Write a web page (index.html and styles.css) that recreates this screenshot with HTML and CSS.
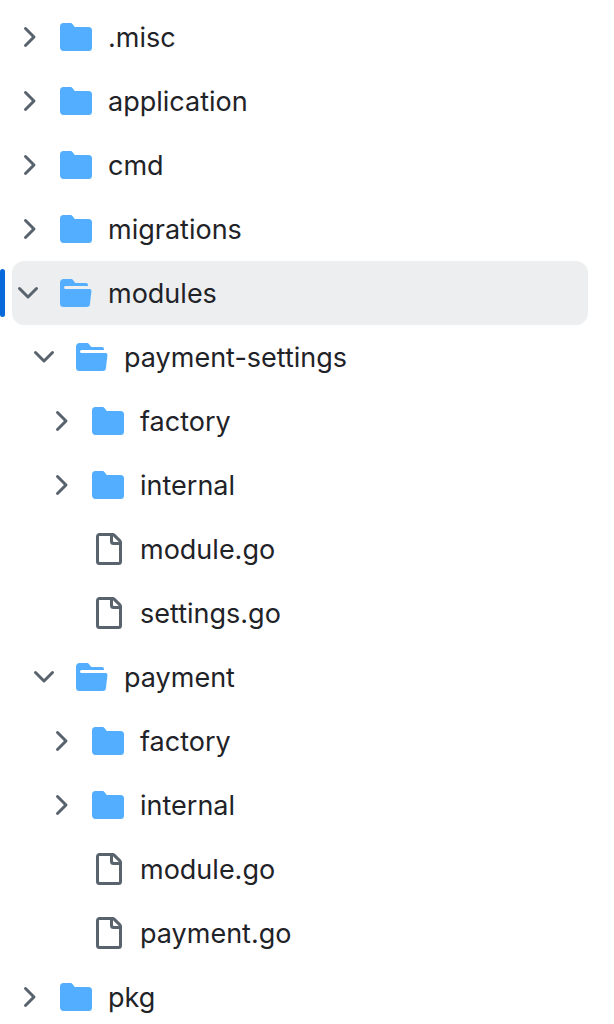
FILE: index.html
```html
<!DOCTYPE html>
<html lang="en">
<head>
<meta charset="utf-8">
<title>File tree</title>
<link rel="stylesheet" href="styles.css">
</head>
<body>
<svg class="defs" width="0" height="0" aria-hidden="true">
  <symbol id="i-right" viewBox="0 0 16 16"><path d="M6.22 3.22a.75.75 0 0 1 1.06 0l4.25 4.25a.75.75 0 0 1 0 1.06l-4.25 4.25a.751.751 0 0 1-1.042-.018.751.751 0 0 1-.018-1.042L9.94 8 6.22 4.28a.75.75 0 0 1 0-1.06Z"/></symbol>
  <symbol id="i-down" viewBox="0 0 16 16"><path d="M12.78 5.22a.749.749 0 0 1 0 1.06l-4.25 4.25a.749.749 0 0 1-1.06 0L3.22 6.28a.749.749 0 1 1 1.06-1.06L8 8.94l3.72-3.72a.749.749 0 0 1 1.06 0Z"/></symbol>
  <symbol id="i-folder" viewBox="0 0 16 16"><path d="M1.75 1A1.75 1.75 0 0 0 0 2.75v10.5C0 14.216.784 15 1.75 15h12.5A1.75 1.75 0 0 0 16 13.25v-8.5A1.75 1.75 0 0 0 14.25 3H7.5a.25.25 0 0 1-.2-.1l-.9-1.2C6.07 1.26 5.55 1 5 1H1.75Z"/></symbol>
  <symbol id="i-open" viewBox="0 0 16 16"><path d="M.513 1.513A1.75 1.75 0 0 1 1.75 1h3.5c.55 0 1.07.26 1.4.7l.9 1.2a.25.25 0 0 0 .2.1H13a1 1 0 0 1 1 1v.5H2.75a.75.75 0 0 0 0 1.5h11.978a1 1 0 0 1 .994 1.117L15 13.25A1.75 1.75 0 0 1 13.25 15H1.75A1.75 1.75 0 0 1 0 13.25V2.75c0-.464.184-.91.513-1.237Z"/></symbol>
  <symbol id="i-file" viewBox="0 0 16 16"><path d="M2 1.75C2 .784 2.784 0 3.75 0h6.586c.464 0 .909.184 1.237.513l2.914 2.914c.329.328.513.773.513 1.237v9.586A1.75 1.75 0 0 1 13.25 16h-9.5A1.75 1.75 0 0 1 2 14.25Zm1.75-.25a.25.25 0 0 0-.25.25v12.5c0 .138.112.25.25.25h9.5a.25.25 0 0 0 .25-.25V6h-2.75A1.75 1.75 0 0 1 9 4.25V1.5Zm6.75.062V4.25c0 .138.112.25.25.25h2.688l-.011-.013-2.914-2.914-.013-.011Z"/></symbol>
</svg>
<ul class="tree">
  <li class="row"><svg class="chev"><use href="#i-right"/></svg><svg class="dir"><use href="#i-folder"/></svg><span class="name">.misc</span></li>
  <li class="row"><svg class="chev"><use href="#i-right"/></svg><svg class="dir"><use href="#i-folder"/></svg><span class="name">application</span></li>
  <li class="row"><svg class="chev"><use href="#i-right"/></svg><svg class="dir"><use href="#i-folder"/></svg><span class="name">cmd</span></li>
  <li class="row"><svg class="chev"><use href="#i-right"/></svg><svg class="dir"><use href="#i-folder"/></svg><span class="name">migrations</span></li>
  <li class="row current"><svg class="chev"><use href="#i-down"/></svg><svg class="dir"><use href="#i-open"/></svg><span class="name">modules</span></li>
  <li class="row l1"><svg class="chev"><use href="#i-down"/></svg><svg class="dir"><use href="#i-open"/></svg><span class="name">payment-settings</span></li>
  <li class="row l2"><svg class="chev"><use href="#i-right"/></svg><svg class="dir"><use href="#i-folder"/></svg><span class="name">factory</span></li>
  <li class="row l2"><svg class="chev"><use href="#i-right"/></svg><svg class="dir"><use href="#i-folder"/></svg><span class="name">internal</span></li>
  <li class="row l2"><span class="chev"></span><svg class="file"><use href="#i-file"/></svg><span class="name">module.go</span></li>
  <li class="row l2"><span class="chev"></span><svg class="file"><use href="#i-file"/></svg><span class="name">settings.go</span></li>
  <li class="row l1"><svg class="chev"><use href="#i-down"/></svg><svg class="dir"><use href="#i-open"/></svg><span class="name">payment</span></li>
  <li class="row l2"><svg class="chev"><use href="#i-right"/></svg><svg class="dir"><use href="#i-folder"/></svg><span class="name">factory</span></li>
  <li class="row l2"><svg class="chev"><use href="#i-right"/></svg><svg class="dir"><use href="#i-folder"/></svg><span class="name">internal</span></li>
  <li class="row l2"><span class="chev"></span><svg class="file"><use href="#i-file"/></svg><span class="name">module.go</span></li>
  <li class="row l2"><span class="chev"></span><svg class="file"><use href="#i-file"/></svg><span class="name">payment.go</span></li>
  <li class="row"><svg class="chev"><use href="#i-right"/></svg><svg class="dir"><use href="#i-folder"/></svg><span class="name">pkg</span></li>
</ul>
</body>
</html>
```
FILE: styles.css
```css
html, body {
  margin: 0;
  height: 1024px;
  overflow: hidden;
  background: #ffffff;
}
.defs {
  position: absolute;
}
.tree {
  list-style: none;
  margin: 0;
  padding: 5px 26px 0 12px;
  font-family: Inter, "Liberation Sans", sans-serif;
  font-size: 27px;
  color: #1f2328;
}
.row {
  position: relative;
  display: flex;
  align-items: center;
  height: 64px;
  border-radius: 12px;
}
.l1 { padding-left: 16px; }
.l2 { padding-left: 32px; }
.current { background: #eceef0; }
.current::before {
  content: "";
  position: absolute;
  left: -12px;
  top: 8px;
  width: 5px;
  height: 48px;
  border-radius: 3px;
  background: #0969da;
}
.chev {
  width: 32px;
  height: 32px;
  flex: none;
  fill: #59636e;
}
.dir, .file {
  width: 32px;
  height: 32px;
  flex: none;
  margin-left: 16px;
}
.dir { fill: #54aeff; }
.file { fill: #59636e; }
.name {
  margin-left: 16px;
  white-space: nowrap;
}
```
